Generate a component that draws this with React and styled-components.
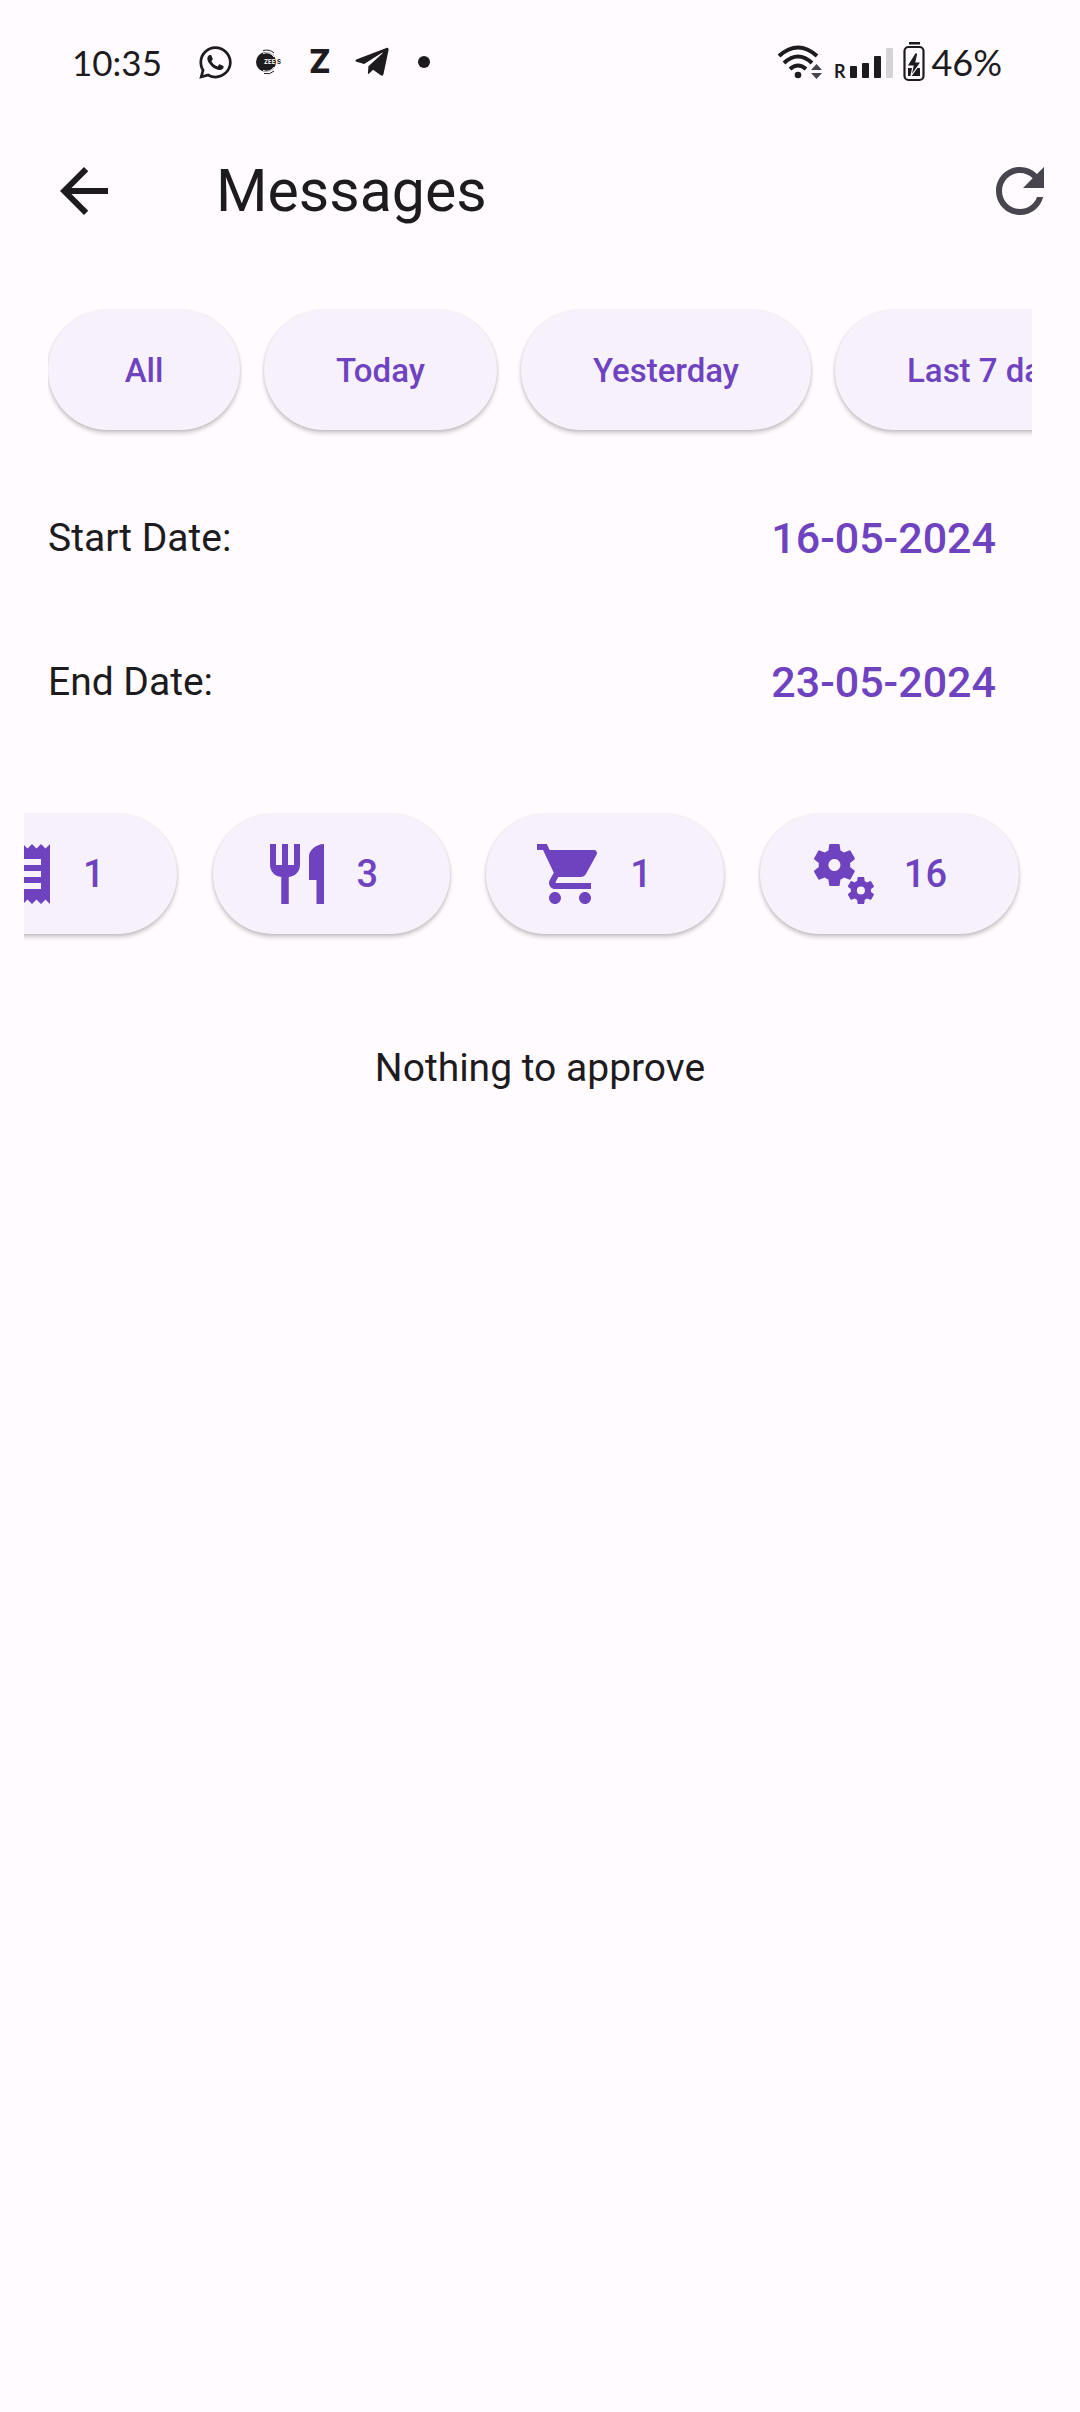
import React, { useLayoutEffect, useRef } from "react";
import styled, { createGlobalStyle } from "styled-components";
import {
  MdArrowBack,
  MdRefresh,
  MdReceipt,
  MdRestaurant,
  MdShoppingCart,
  MdMiscellaneousServices,
} from "react-icons/md";
import { FaWhatsapp, FaTelegramPlane } from "react-icons/fa";

const colors = {
  background: "#fffbff",
  surface: "#f6f1fb",
  primary: "#6f43c0",
  text: "#1d1b1e",
  muted: "#49454e",
};

const GlobalStyle = createGlobalStyle`
  *, *::before, *::after { box-sizing: border-box; }
  body {
    margin: 0;
    background: ${colors.background};
    color: ${colors.text};
    font-family: Roboto, "Liberation Sans", sans-serif;
  }
  button { font: inherit; color: inherit; border: 0; margin: 0; padding: 0; background: none; cursor: pointer; }
`;

const Screen = styled.div`
  min-height: 100vh;
  display: flex;
  flex-direction: column;
`;

const StatusBar = styled.div`
  display: flex;
  align-items: center;
  justify-content: space-between;
  height: 124px;
  padding: 0 78px 0 72px;
  font-family: Lato, "Open Sans", sans-serif;
  font-size: 36px;
  line-height: 44px;
`;

const StatusGroup = styled.div`
  display: flex;
  align-items: center;
  gap: ${(p) => p.$gap}px;

  svg { display: block; flex: none; }
`;

const Clock = styled.time`
  font-size: 35px;
`;

const Notifications = styled.div`
  display: grid;
  grid-template-columns: repeat(5, 52px);
  place-items: center;

  svg { display: block; }
`;

const AppMark = styled.span`
  font-family: Inter, sans-serif;
  font-weight: 800;
  font-size: 32px;
`;

const Dot = styled.span`
  width: 12px;
  height: 12px;
  border-radius: 50%;
  background: ${colors.text};
`;

const AppBar = styled.header`
  display: flex;
  align-items: center;
  height: 134px;
  padding: 0 24px 0 48px;
`;

const IconButton = styled.button`
  display: grid;
  place-items: center;
  color: ${(p) => (p.$muted ? colors.muted : colors.text)};

  svg { display: block; }
`;

const Title = styled.h1`
  flex: 1;
  margin: 0 0 0 96px;
  font-size: 59px;
  line-height: 72px;
  font-weight: 400;
`;

const Main = styled.main`
  display: flex;
  flex-direction: column;
  padding-top: 40px;
`;

const Scroller = styled.div`
  display: flex;
  gap: ${(p) => p.$gap}px;
  margin: 0 ${(p) => p.$inset}px;
  padding: 12px 0;
  overflow-x: auto;
  scrollbar-width: none;
`;

const Pill = styled.button`
  flex: none;
  display: flex;
  align-items: center;
  justify-content: center;
  gap: 24px;
  min-width: 192px;
  height: 120px;
  border-radius: 60px;
  background: ${colors.surface};
  color: ${colors.primary};
  font-weight: 500;
  box-shadow: 0 3px 4px rgba(0, 0, 0, 0.22), 0 0 3px rgba(0, 0, 0, 0.08);

  svg { display: block; }
`;

const FilterPill = styled(Pill)`
  padding: 0 72px;
  font-size: 33px;
`;

const CountPill = styled(Pill)`
  padding: 0 72px 0 48px;
  font-size: 38px;
`;

const EndSpace = styled.span`
  flex: none;
  width: 1px;
`;

const Dates = styled.div`
  padding: 24px 48px 48px;
`;

const DateRow = styled.div`
  display: flex;
  align-items: center;
  justify-content: space-between;
  height: 144px;
  font-size: 39px;
`;

const DateButton = styled.button`
  height: 120px;
  padding: 0 36px;
  color: ${colors.primary};
  font-size: 43px;
  font-weight: 500;
`;

const EmptyNote = styled.p`
  margin: 98px 24px 0;
  font-size: 39px;
  line-height: 48px;
  text-align: center;
`;

const filters = ["All", "Today", "Yesterday", "Last 7 days"];

const dates = [
  { id: "start", label: "Start Date:", value: "16-05-2024" },
  { id: "end", label: "End Date:", value: "23-05-2024" },
];

const counts = [
  { name: "Receipts", Icon: MdReceipt, value: 1 },
  { name: "Meals", Icon: MdRestaurant, value: 3 },
  { name: "Orders", Icon: MdShoppingCart, value: 1 },
  { name: "Services", Icon: MdMiscellaneousServices, value: 16 },
];

const BadgeIcon = () => (
  <svg width="28" height="26" viewBox="0 0 28 26" aria-hidden="true">
    <circle cx="12" cy="13" r="10" fill={colors.text} />
    <path d="M9 1.500Q16 0 20 4M10 24.500Q16 26 20 22" fill="none" stroke={colors.text} strokeWidth="1" />
    <path d="M9 4.500Q16 2 20 8M9 21.500Q16 24 20 18" fill="none" stroke={colors.background} strokeWidth="1" />
    <text x="10" y="15" fontFamily="Inter, sans-serif" fontWeight="700" fontSize="6" fill={colors.background}>ZEE</text>
    <text x="23" y="15" fontFamily="Inter, sans-serif" fontWeight="700" fontSize="6" fill={colors.text}>S</text>
  </svg>
);

const WifiIcon = () => (
  <svg width="46" height="36" viewBox="0 0 46 36" aria-hidden="true">
    <g fill="none" stroke={colors.text} strokeWidth="4">
      <path d="M2 12Q21 -5 40 12" />
      <path d="M7 19Q21 6 35 19" />
      <path d="M13 25Q21 18 29 25" />
    </g>
    <circle cx="21" cy="31" r="3.300" fill={colors.text} />
    <path
      d="M34 26L39.500 20L45 26ZM34 29L39.500 35L45 29Z"
      fill={colors.muted}
      stroke={colors.background}
      strokeWidth="1"
      paintOrder="stroke"
    />
  </svg>
);

const SignalIcon = () => (
  <svg width="60" height="44" viewBox="0 -4 60 44" aria-hidden="true">
    <text x="1" y="34" fontFamily="Lato, sans-serif" fontWeight="700" fontSize="18" fill={colors.text}>R</text>
    <g fill={colors.text}>
      <rect x="17" y="22" width="7" height="12" rx="1" />
      <rect x="29" y="19" width="7" height="15" rx="1" />
      <rect x="41" y="12" width="7" height="22" rx="1" />
    </g>
    <rect x="53" y="4" width="7" height="30" rx="1" fill="#d6d3d8" />
  </svg>
);

const BatteryIcon = () => (
  <svg width="22" height="40" viewBox="0 0 22 40" aria-hidden="true">
    <rect x="6" y="0" width="11" height="2.500" fill={colors.text} />
    <rect x="1.500" y="5" width="19" height="33" rx="4" fill="none" stroke={colors.text} strokeWidth="2.200" />
    <path d="M5 26H17V34H5Z" fill={colors.text} />
    <path d="M12 11L4 24H10L8 34L18 20H13L15 11Z" fill={colors.text} stroke={colors.background} strokeWidth="1.200" />
  </svg>
);

export default function App() {
  const countRow = useRef(null);

  // The counters open scrolled to their last entry.
  useLayoutEffect(() => {
    countRow.current.scrollLeft = countRow.current.scrollWidth;
  }, []);

  return (
    <>
      <GlobalStyle />
      <Screen>
        <StatusBar>
          <StatusGroup $gap={28}>
            <Clock>10:35</Clock>
            <Notifications>
              <FaWhatsapp size={37} color={colors.text} />
              <BadgeIcon />
              <AppMark>Z</AppMark>
              <FaTelegramPlane size={38} color={colors.text} />
              <Dot />
            </Notifications>
          </StatusGroup>
          <StatusGroup $gap={10}>
            <WifiIcon />
            <SignalIcon />
            <StatusGroup $gap={6}>
              <BatteryIcon />
              <span>46%</span>
            </StatusGroup>
          </StatusGroup>
        </StatusBar>

        <AppBar>
          <IconButton type="button" aria-label="Back">
            <MdArrowBack size={72} />
          </IconButton>
          <Title>Messages</Title>
          <IconButton type="button" aria-label="Refresh" $muted>
            <MdRefresh size={72} />
          </IconButton>
        </AppBar>

        <Main>
          <Scroller $gap={24} $inset={48}>
            {filters.map((label) => (
              <FilterPill type="button" key={label}>{label}</FilterPill>
            ))}
          </Scroller>

          <Dates>
            {dates.map(({ id, label, value }) => (
              <DateRow key={id}>
                <span id={`${id}-label`}>{label}</span>
                <DateButton type="button" id={`${id}-value`} aria-labelledby={`${id}-label ${id}-value`}>
                  {value}
                </DateButton>
              </DateRow>
            ))}
          </Dates>

          <Scroller $gap={36} $inset={24} ref={countRow}>
            {counts.map(({ name, Icon, value }) => (
              <CountPill type="button" key={name} title={name}>
                <Icon size={72} />
                {value}
              </CountPill>
            ))}
            <EndSpace />
          </Scroller>

          <EmptyNote>Nothing to approve</EmptyNote>
        </Main>
      </Screen>
    </>
  );
}
